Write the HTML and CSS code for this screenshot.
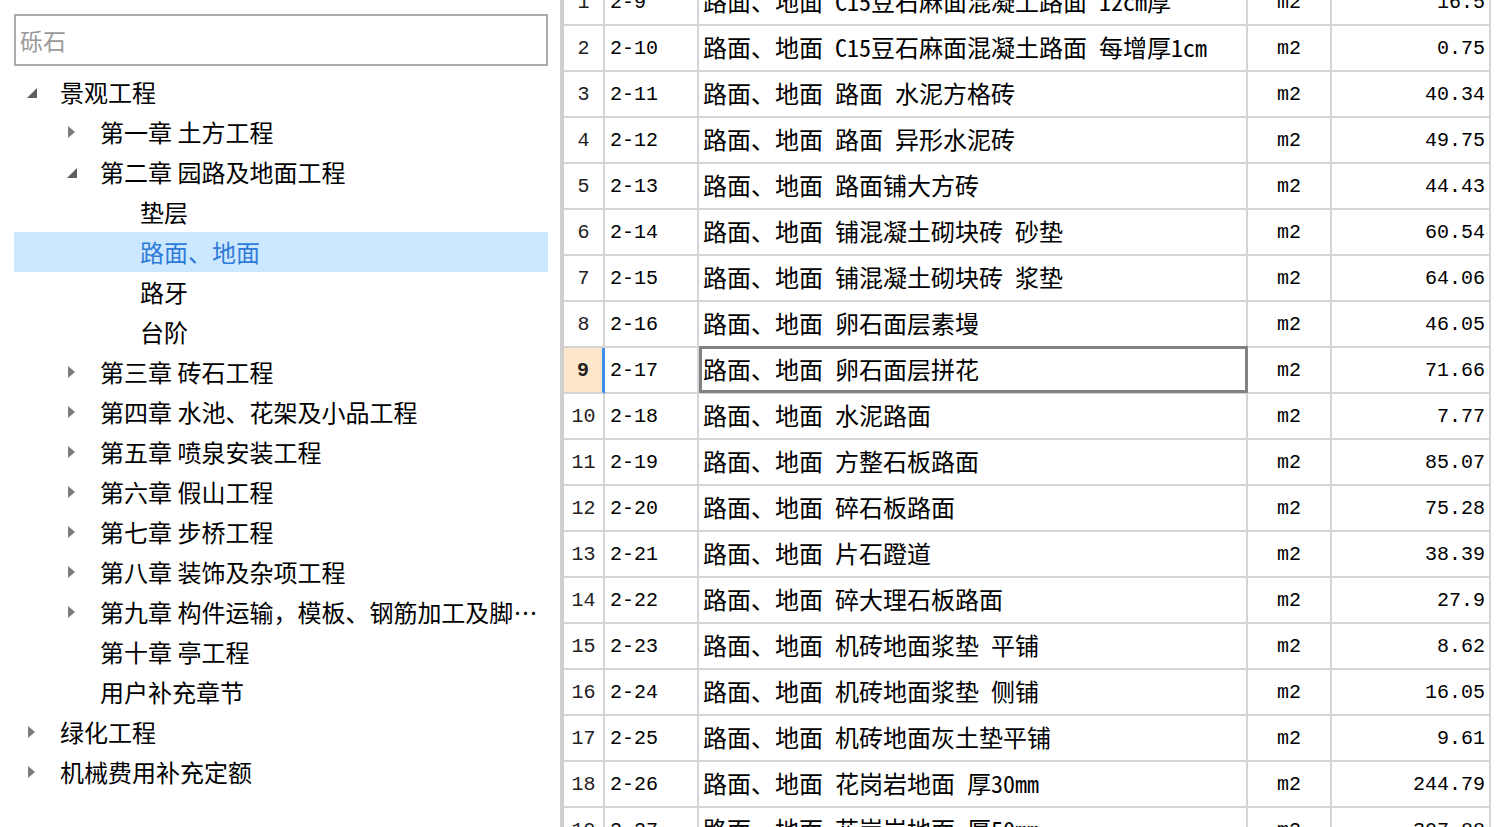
FILE: index.html
```html
<!DOCTYPE html>
<html lang="zh-CN">
<head>
<meta charset="utf-8">
<title>定额</title>
<link rel="stylesheet" href="styles.css">
</head>
<body>
<div class="app">
  <aside class="left">
    <div class="search"><input class="search-input" type="text" placeholder="砾石"></div>
    <ul class="tree">
      <li class="node l0"><span class="arrow open"></span><span class="label">景观工程</span></li>
      <li class="node l1"><span class="arrow closed"></span><span class="label">第一章 土方工程</span></li>
      <li class="node l1"><span class="arrow open"></span><span class="label">第二章 园路及地面工程</span></li>
      <li class="node l2"><span class="arrow"></span><span class="label">垫层</span></li>
      <li class="node l2 selected"><span class="arrow"></span><span class="label">路面、地面</span></li>
      <li class="node l2"><span class="arrow"></span><span class="label">路牙</span></li>
      <li class="node l2"><span class="arrow"></span><span class="label">台阶</span></li>
      <li class="node l1"><span class="arrow closed"></span><span class="label">第三章 砖石工程</span></li>
      <li class="node l1"><span class="arrow closed"></span><span class="label">第四章 水池、花架及小品工程</span></li>
      <li class="node l1"><span class="arrow closed"></span><span class="label">第五章 喷泉安装工程</span></li>
      <li class="node l1"><span class="arrow closed"></span><span class="label">第六章 假山工程</span></li>
      <li class="node l1"><span class="arrow closed"></span><span class="label">第七章 步桥工程</span></li>
      <li class="node l1"><span class="arrow closed"></span><span class="label">第八章 装饰及杂项工程</span></li>
      <li class="node l1"><span class="arrow closed"></span><span class="label">第九章 构件运输，模板、钢筋加工及脚手架工程</span></li>
      <li class="node l1"><span class="arrow"></span><span class="label">第十章 亭工程</span></li>
      <li class="node l1"><span class="arrow"></span><span class="label">用户补充章节</span></li>
      <li class="node l0"><span class="arrow closed"></span><span class="label">绿化工程</span></li>
      <li class="node l0"><span class="arrow closed"></span><span class="label">机械费用补充定额</span></li>
    </ul>
  </aside>
  <main class="right">
    <div class="grid">
      <div class="row"><div class="c no">1</div><div class="c code">2-9</div><div class="c name">路面、地面 C15豆石麻面混凝土路面 12cm厚</div><div class="c unit">m2</div><div class="c qty">16.5</div></div>
      <div class="row"><div class="c no">2</div><div class="c code">2-10</div><div class="c name">路面、地面 C15豆石麻面混凝土路面 每增厚1cm</div><div class="c unit">m2</div><div class="c qty">0.75</div></div>
      <div class="row"><div class="c no">3</div><div class="c code">2-11</div><div class="c name">路面、地面 路面 水泥方格砖</div><div class="c unit">m2</div><div class="c qty">40.34</div></div>
      <div class="row"><div class="c no">4</div><div class="c code">2-12</div><div class="c name">路面、地面 路面 异形水泥砖</div><div class="c unit">m2</div><div class="c qty">49.75</div></div>
      <div class="row"><div class="c no">5</div><div class="c code">2-13</div><div class="c name">路面、地面 路面铺大方砖</div><div class="c unit">m2</div><div class="c qty">44.43</div></div>
      <div class="row"><div class="c no">6</div><div class="c code">2-14</div><div class="c name">路面、地面 铺混凝土砌块砖 砂垫</div><div class="c unit">m2</div><div class="c qty">60.54</div></div>
      <div class="row"><div class="c no">7</div><div class="c code">2-15</div><div class="c name">路面、地面 铺混凝土砌块砖 浆垫</div><div class="c unit">m2</div><div class="c qty">64.06</div></div>
      <div class="row"><div class="c no">8</div><div class="c code">2-16</div><div class="c name">路面、地面 卵石面层素墁</div><div class="c unit">m2</div><div class="c qty">46.05</div></div>
      <div class="row current"><div class="c no">9</div><div class="c code">2-17</div><div class="c name">路面、地面 卵石面层拼花</div><div class="c unit">m2</div><div class="c qty">71.66</div></div>
      <div class="row"><div class="c no">10</div><div class="c code">2-18</div><div class="c name">路面、地面 水泥路面</div><div class="c unit">m2</div><div class="c qty">7.77</div></div>
      <div class="row"><div class="c no">11</div><div class="c code">2-19</div><div class="c name">路面、地面 方整石板路面</div><div class="c unit">m2</div><div class="c qty">85.07</div></div>
      <div class="row"><div class="c no">12</div><div class="c code">2-20</div><div class="c name">路面、地面 碎石板路面</div><div class="c unit">m2</div><div class="c qty">75.28</div></div>
      <div class="row"><div class="c no">13</div><div class="c code">2-21</div><div class="c name">路面、地面 片石蹬道</div><div class="c unit">m2</div><div class="c qty">38.39</div></div>
      <div class="row"><div class="c no">14</div><div class="c code">2-22</div><div class="c name">路面、地面 碎大理石板路面</div><div class="c unit">m2</div><div class="c qty">27.9</div></div>
      <div class="row"><div class="c no">15</div><div class="c code">2-23</div><div class="c name">路面、地面 机砖地面浆垫 平铺</div><div class="c unit">m2</div><div class="c qty">8.62</div></div>
      <div class="row"><div class="c no">16</div><div class="c code">2-24</div><div class="c name">路面、地面 机砖地面浆垫 侧铺</div><div class="c unit">m2</div><div class="c qty">16.05</div></div>
      <div class="row"><div class="c no">17</div><div class="c code">2-25</div><div class="c name">路面、地面 机砖地面灰土垫平铺</div><div class="c unit">m2</div><div class="c qty">9.61</div></div>
      <div class="row"><div class="c no">18</div><div class="c code">2-26</div><div class="c name">路面、地面 花岗岩地面 厚30mm</div><div class="c unit">m2</div><div class="c qty">244.79</div></div>
      <div class="row"><div class="c no">19</div><div class="c code">2-27</div><div class="c name">路面、地面 花岗岩地面 厚50mm</div><div class="c unit">m2</div><div class="c qty">307.88</div></div>
    </div>
  </main>
</div>
</body>
</html>
```
FILE: styles.css
```css
* { box-sizing: border-box; }
html, body { margin: 0; padding: 0; background: #fff; }
body { width: 1507px; height: 827px; overflow: hidden; }

.app {
  display: flex;
  height: 827px;
}

.left {
  width: 560px;
  flex: none;
  padding: 14px 12px 0 14px;
  font-family: "Noto Sans CJK SC", "Noto Sans", sans-serif;
}

.search-input {
  display: block;
  width: 534px;
  height: 52px;
  border: 2px solid #ababab;
  padding: 0 4px;
  font-family: "Noto Sans CJK SC", sans-serif;
  font-size: 23px;
  color: #000;
  outline: none;
}
.search-input::placeholder { color: #9a9a9a; }

.tree {
  list-style: none;
  margin: 6px 0 0;
  padding: 0;
}
.node {
  display: flex;
  align-items: center;
  height: 40px;
  font-size: 24px;
  color: #000;
  white-space: nowrap;
}
.node.l0 { padding-left: 12px; }
.node.l1 { padding-left: 52px; }
.node.l2 { padding-left: 92px; }
.node.selected { background: #cce8ff; color: #2f7bd8; }

.arrow {
  flex: none;
  width: 34px;
  height: 40px;
  position: relative;
}
.arrow.closed::before {
  content: "";
  position: absolute;
  left: 2px;
  top: 14px;
  border-left: 7px solid #7d7d7d;
  border-top: 6px solid transparent;
  border-bottom: 6px solid transparent;
}
.arrow.open::before {
  content: "";
  position: absolute;
  left: 1px;
  top: 16px;
  border-bottom: 10px solid #5e5e5e;
  border-left: 10px solid transparent;
}
.label {
  overflow: hidden;
  text-overflow: ellipsis;
  padding-right: 0;
  line-height: 40px;
}

.right {
  flex: 1;
  overflow: hidden;
  height: 827px;
}
.grid {
  margin-top: -20px;
  width: 931px;
  border-left: 4px solid #cfcfcf;
  font-family: "Noto Sans Mono CJK SC", "Noto Sans CJK SC", monospace;
  font-size: 24px;
  color: #000;
}
.row {
  display: grid;
  grid-template-columns: 41px 94px 549px 84px 159px;
  height: 46px;
}
.c {
  border-right: 2px solid #d4d4d4;
  border-bottom: 2px solid #d4d4d4;
  display: flex;
  align-items: center;
  white-space: nowrap;
  overflow: hidden;
  position: relative;
}
.no {
  justify-content: center;
  font-family: "Liberation Mono", monospace;
  font-size: 20px;
  color: #222;
}
.code {
  padding-left: 5px;
  font-family: "Liberation Mono", monospace;
  font-size: 20px;
}
.name { padding-left: 4px; padding-bottom: 4px; }
.unit {
  justify-content: center;
  font-family: "Liberation Mono", monospace;
  font-size: 20px;
}
.qty {
  justify-content: flex-end;
  padding-right: 4px;
  font-family: "Liberation Mono", monospace;
  font-size: 20px;
}

.current .no {
  background: #fde6c9;
  font-weight: bold;
  border-right: 3px solid #3e8ef0;
}
.current .name { overflow: visible; }
.current .name::after {
  content: "";
  position: absolute;
  left: 0;
  right: -2px;
  top: -2px;
  bottom: -1px;
  border: 3px solid #828282;
  pointer-events: none;
}
```
